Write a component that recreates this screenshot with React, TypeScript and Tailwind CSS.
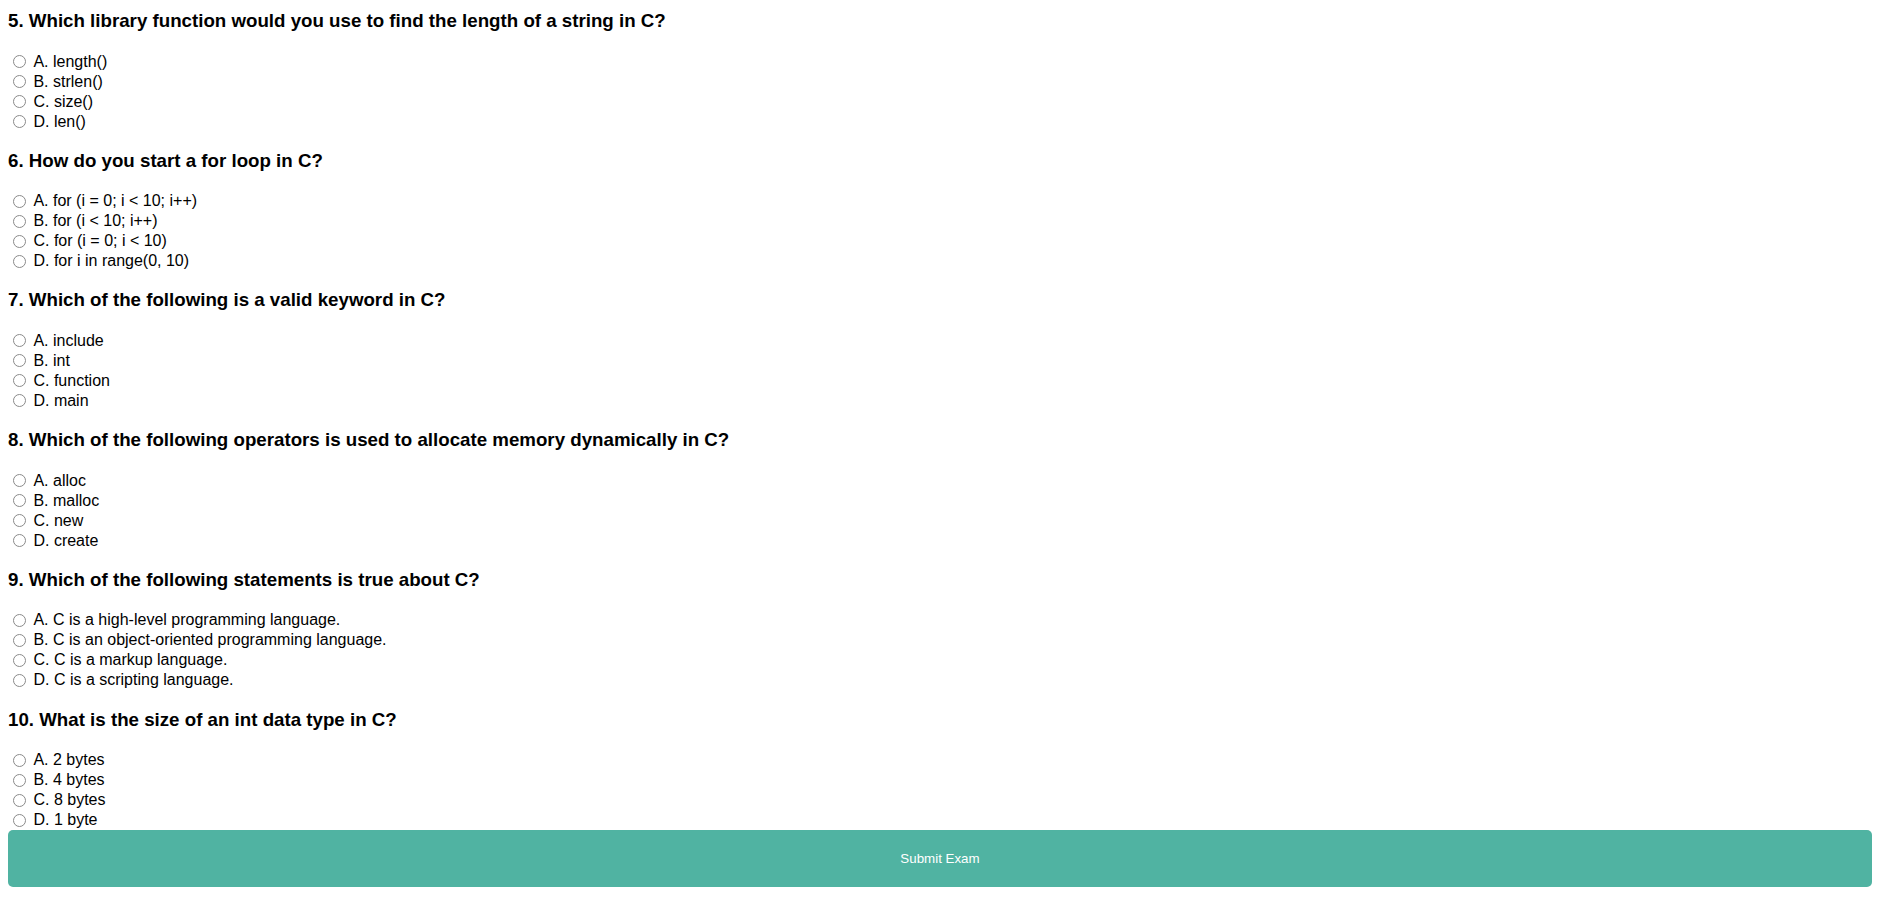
import React from 'react';

interface Question {
  id: number;
  text: string;
  options: string[];
}

const questions: Question[] = [
  {
    id: 5,
    text: 'Which library function would you use to find the length of a string in C?',
    options: ['length()', 'strlen()', 'size()', 'len()'],
  },
  {
    id: 6,
    text: 'How do you start a for loop in C?',
    options: ['for (i = 0; i < 10; i++)', 'for (i < 10; i++)', 'for (i = 0; i < 10)', 'for i in range(0, 10)'],
  },
  {
    id: 7,
    text: 'Which of the following is a valid keyword in C?',
    options: ['include', 'int', 'function', 'main'],
  },
  {
    id: 8,
    text: 'Which of the following operators is used to allocate memory dynamically in C?',
    options: ['alloc', 'malloc', 'new', 'create'],
  },
  {
    id: 9,
    text: 'Which of the following statements is true about C?',
    options: [
      'C is a high-level programming language.',
      'C is an object-oriented programming language.',
      'C is a markup language.',
      'C is a scripting language.',
    ],
  },
  {
    id: 10,
    text: 'What is the size of an int data type in C?',
    options: ['2 bytes', '4 bytes', '8 bytes', '1 byte'],
  },
];

const letters = ['A', 'B', 'C', 'D'];

export default function App() {
  return (
    <div className="min-h-screen bg-white text-black font-['Liberation_Sans',Arial,sans-serif]">
      <form className="pl-2 pr-[15px] pt-[10px] pb-5">
        <div className="flex flex-col gap-[18.24px]">
          {questions.map((q) => (
            <div key={q.id}>
              {/* Question title */}
              <h3 className="text-[18.72px] font-bold leading-[21.5px] mb-5">
                {q.id}. {q.text}
              </h3>

              {/* Options */}
              <div>
                {q.options.map((opt, i) => (
                  <label key={i} className="flex items-center h-5 text-base">
                    <input
                      type="radio"
                      name={`q${q.id}`}
                      value={letters[i]}
                      className="appearance-none w-[13px] h-[13px] ml-[5px] mr-[3px] rounded-full border border-[#8a8a8a] bg-white"
                    />
                    <span className="pl-[4.45px] whitespace-pre">
                      {letters[i]}. {opt}
                    </span>
                  </label>
                ))}
              </div>
            </div>
          ))}
        </div>

        <button
          type="submit"
          className="block w-full h-[57px] mt-0 rounded-[5px] bg-[#50b3a2] text-white text-[13.33px] font-['Liberation_Sans',Arial,sans-serif]"
        >
          Submit Exam
        </button>
      </form>
    </div>
  );
}
